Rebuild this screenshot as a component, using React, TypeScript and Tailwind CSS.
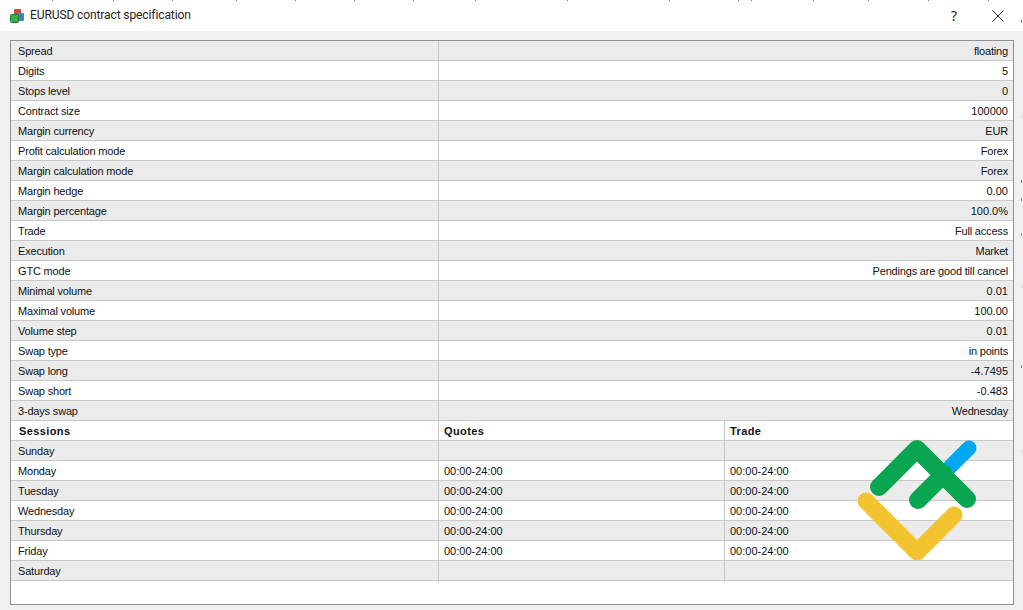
import React from "react";

const specs: [string, string][] = [
  ["Spread", "floating"],
  ["Digits", "5"],
  ["Stops level", "0"],
  ["Contract size", "100000"],
  ["Margin currency", "EUR"],
  ["Profit calculation mode", "Forex"],
  ["Margin calculation mode", "Forex"],
  ["Margin hedge", "0.00"],
  ["Margin percentage", "100.0%"],
  ["Trade", "Full access"],
  ["Execution", "Market"],
  ["GTC mode", "Pendings are good till cancel"],
  ["Minimal volume", "0.01"],
  ["Maximal volume", "100.00"],
  ["Volume step", "0.01"],
  ["Swap type", "in points"],
  ["Swap long", "-4.7495"],
  ["Swap short", "-0.483"],
  ["3-days swap", "Wednesday"],
];

const sessions: [string, string, string][] = [
  ["Sunday", "", ""],
  ["Monday", "00:00-24:00", "00:00-24:00"],
  ["Tuesday", "00:00-24:00", "00:00-24:00"],
  ["Wednesday", "00:00-24:00", "00:00-24:00"],
  ["Thursday", "00:00-24:00", "00:00-24:00"],
  ["Friday", "00:00-24:00", "00:00-24:00"],
  ["Saturday", "", ""],
];

// bits of the chart behind the dialog that show along the top and right edges
const topTicks = [52, 113, 172, 236, 295, 354, 413, 475, 567, 669, 738, 751, 813, 868, 928, 988];
const edgeSpecks: [number, string][] = [
  [20, "#d9646e"],
  [115, "#e8d870"],
  [180, "#7a6ad0"],
  [198, "#b070d0"],
  [233, "#d070c8"],
  [285, "#e8d870"],
  [365, "#d9646e"],
  [450, "#e8d870"],
];

const Logo = () => (
  <svg className="absolute left-[850px] top-[435px]" width="135" height="130" viewBox="850 435 135 130" fill="none" strokeLinecap="round" strokeLinejoin="round">
    <path d="M969 448L947 470" stroke="#00a8ef" strokeWidth="15" />
    <path d="M879 487L917 449L967 499" stroke="#0aa550" strokeWidth="18" />
    <path d="M918 500L944 474" stroke="#0aa550" strokeWidth="18" />
    <path d="M866 501L917 552L954 515" stroke="#f4c430" strokeWidth="17" />
  </svg>
);

export default function App() {
  return (
    <div className="relative w-[1023px] h-[610px] overflow-hidden bg-[#f0f0f0] text-[11px] leading-[21px] text-[#111] font-['Liberation_Sans',sans-serif]">
      <div className="flex h-[31px] items-center bg-white pl-[9px] pr-[19px]">
        <svg width="16" height="16" viewBox="0 0 16 16">
          <rect x="5" y="1" width="7" height="6" rx="1" fill="#c9503c" />
          <rect x="8" y="5" width="7" height="8" rx="1" fill="#3f83c9" />
          <rect x="1.5" y="6.5" width="8" height="8" rx="1" fill="#35b04a" stroke="#1c7a30" />
        </svg>
        <span className="ml-[5px] text-[12px] tracking-[-0.1px] text-[#222] font-['Roboto','Noto_Sans',sans-serif]">EURUSD contract specification</span>
        <span className="ml-auto text-[14px] font-['Noto_Sans',sans-serif] text-[#222]">?</span>
        <svg className="ml-[35px]" width="12" height="12" viewBox="0 0 12 12" stroke="#222" strokeWidth="1">
          <path d="M0.5 0.5L11.5 11.5M11.5 0.5L0.5 11.5" />
        </svg>
      </div>
      <div className="ml-[10px] mt-[9px] h-[565px] w-[1004px] border border-[#8f8f8f] bg-white">
        {specs.map(([label, value], i) => (
          <div key={label} className={`grid h-[20px] grid-cols-[427px_1fr] border-b border-[#c8c8c8] ${i % 2 === 0 ? "bg-[#ebebeb]" : "bg-white"}`}>
            <div className="pl-[7px] tracking-[-0.18px]">{label}</div>
            <div className={`border-l border-[#c8c8c8] pr-[5px] text-right ${/[a-z]/i.test(value) ? "tracking-[-0.18px]" : ""}`}>{value}</div>
          </div>
        ))}
        <div className="grid h-[20px] grid-cols-[427px_286px_1fr] border-b border-[#c8c8c8] bg-white font-bold tracking-[0.4px]">
          <div className="pl-[8px]">Sessions</div>
          <div className="border-l border-[#c8c8c8] pl-[5px]">Quotes</div>
          <div className="border-l border-[#c8c8c8] pl-[5px]">Trade</div>
        </div>
        {sessions.map(([day, quotes, trade], i) => (
          <div key={day} className={`grid h-[20px] grid-cols-[427px_286px_1fr] border-b border-[#c8c8c8] ${i % 2 === 0 ? "bg-[#ebebeb]" : "bg-white"}`}>
            <div className="pl-[7px] tracking-[-0.18px]">{day}</div>
            <div className="border-l border-[#c8c8c8] pl-[5px]">{quotes}</div>
            <div className="border-l border-[#c8c8c8] pl-[5px]">{trade}</div>
          </div>
        ))}
      </div>
      <Logo />
      {topTicks.map((x) => (
        <span key={x} className="absolute top-0 h-px w-px bg-[#777]" style={{ left: x }} />
      ))}
      {edgeSpecks.map(([y, color]) => (
        <span key={y} className="absolute right-px h-[3px] w-px" style={{ top: y, backgroundColor: color }} />
      ))}
    </div>
  );
}
